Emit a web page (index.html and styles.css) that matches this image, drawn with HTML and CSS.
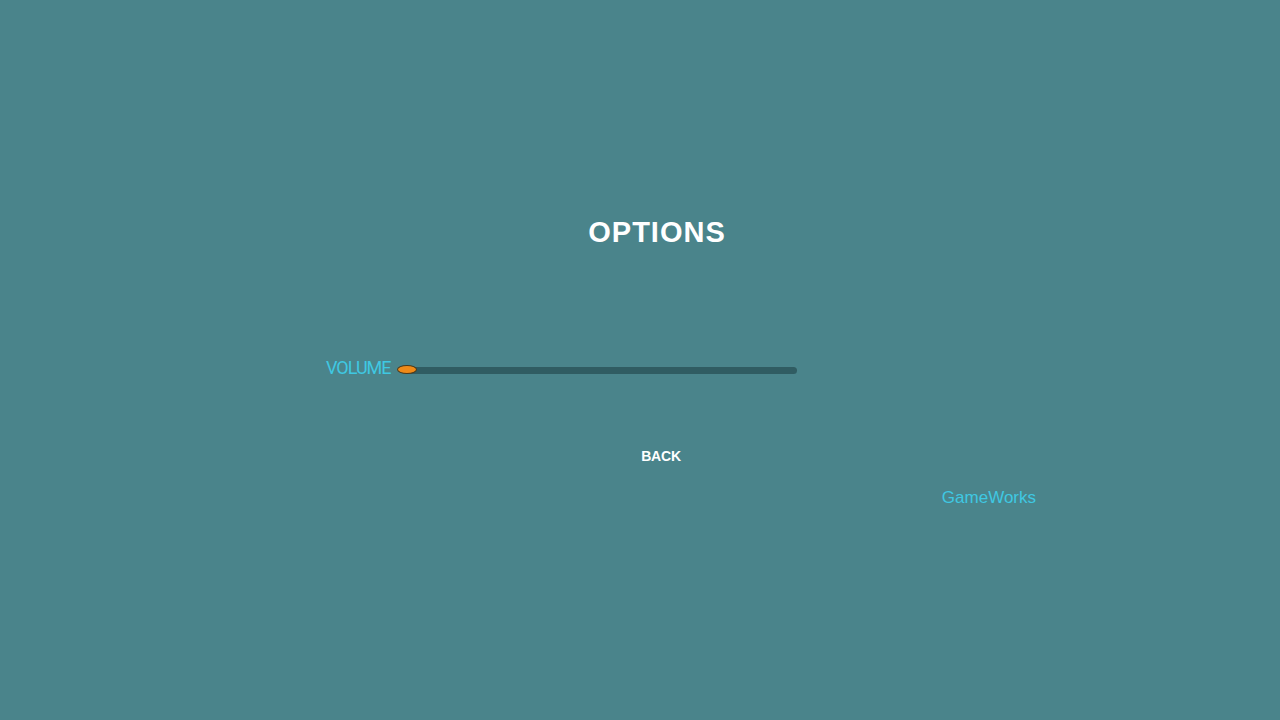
FILE: index.html
```html
<!DOCTYPE html>
<html lang="en">
<head>
    <meta charset="UTF-8">
    <meta name="viewport" content="width=device-width, initial-scale=1.0">
    <title>Options</title>
    <link rel="stylesheet" href="styles.css">
</head>
<body>
    <main class="menu">
        <h1 class="menu-title">OPTIONS</h1>

        <div class="setting">
            <label class="setting-label" for="volume">VOLUME</label>
            <div class="slider" id="volume">
                <div class="slider-track"></div>
                <span class="slider-thumb"></span>
            </div>
        </div>

        <a class="menu-button" href="#">BACK</a>

        <p class="studio">GameWorks</p>
    </main>
</body>
</html>
```

FILE: styles.css
```css
html{
    box-sizing: border-box;
    font-family: 'Liberation Sans', Arial, sans-serif;
}

*,
*:after,
*:before{
    box-sizing: inherit;
}

body{
    margin: 0;
    height: 720px;
    background-color: #4a848b;
    overflow: hidden;
}

.menu{
    display: flex;
    flex-direction: column;
    width: 662px;
    margin-left: 326px;
    padding-top: 218px;
}

.menu-title{
    margin: 0;
    font-size: 29px;
    line-height: 29px;
    font-weight: bold;
    letter-spacing: 1px;
    text-align: center;
    color: #fff;
}

.setting{
    display: flex;
    align-items: center;
    height: 20px;
    margin-top: 113px;
}

.setting-label{
    align-self: flex-start;
    font-family: Roboto, sans-serif;
    font-size: 18px;
    line-height: 16px;
    letter-spacing: -1px;
    color: #3fc8e2;
    margin-right: 7px;
}

.slider{
    position: relative;
    width: 400px;
    height: 20px;
    display: flex;
    align-items: center;
}

.slider-track{
    width: 391px;
    height: 7px;
    margin-left: 8px;
    border-radius: 4px;
    background-color: #305c62;
}

/* thumb sits on top of the track at 0% */
.slider-thumb{
    position: absolute;
    left: -1px;
    top: 5px;
    width: 20px;
    height: 9px;
    border-radius: 50%;
    background-color: #f08a18;
    border: 1px solid #4c3a1a;
}

.menu-button{
    align-self: center;
    margin-top: 69px;
    padding-left: 8px;
    font-size: 14px;
    line-height: 14px;
    font-weight: bold;
    letter-spacing: -.2px;
    color: #fff;
    text-decoration: none;
}

.studio{
    align-self: flex-end;
    margin: 26px -48px 0 0;
    font-size: 17px;
    line-height: 17px;
    color: #3fc8e2;
}
```
